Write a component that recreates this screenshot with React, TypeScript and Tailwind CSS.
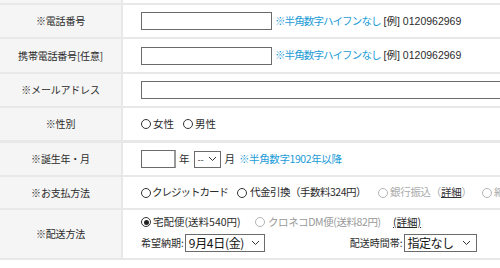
import React from "react";

const Radio = ({ checked = false, disabled = false }: { checked?: boolean; disabled?: boolean }) => (
  <span
    className={`inline-flex items-center justify-center w-[10px] h-[10px] rounded-full border shrink-0 ${
      disabled ? "border-[#b5b5b5]" : "border-[#333]"
    }`}
  >
    {checked && <span className="w-[5px] h-[5px] rounded-full bg-[#222]" />}
  </span>
);

const Chevron = () => (
  <svg width="9" height="6" viewBox="0 0 9 6" className="shrink-0">
    <path d="M1 1 L4.5 4.5 L8 1" fill="none" stroke="#333" strokeWidth="1" />
  </svg>
);

const Row = ({
  label,
  h,
  border = "border-b-2",
  children,
}: {
  label: React.ReactNode;
  h: string;
  border?: string;
  children?: React.ReactNode;
}) => (
  <div className={`flex ${h} ${border} border-[#e8e8e8]`}>
    <div className="w-[121px] shrink-0 bg-[#f5f5f5] flex items-center justify-center text-[10px] tracking-[-0.2px] text-[#2b2b2b]">
      {label}
    </div>
    <div className="w-[2px] shrink-0 bg-[#e8e8e8]" />
    <div className="flex-1 min-w-0 pl-[18px] flex items-center">{children}</div>
  </div>
);

const Blue = ({ children }: { children: React.ReactNode }) => (
  <span className="text-[#1b9bd7]">{children}</span>
);

const Hint = () => (
  <span className="ml-[3px] whitespace-nowrap flex items-center">
    <span className="tracking-[-0.9px]">
      <Blue>※半角数字ハイフンなし</Blue>
    </span>
    <span className="ml-[3px] text-[10.5px]" style={{ fontFamily: "'Liberation Sans', Arial, sans-serif" }}>
      [<span style={{ fontFamily: "'Noto Sans CJK JP', sans-serif" }}>例</span>] 0120962969
    </span>
  </span>
);

export default function App() {
  return (
    <div
      className="w-[500px] h-[268px] overflow-hidden bg-white text-[10.5px] leading-none text-[#2b2b2b]"
      style={{ fontFamily: "'Noto Sans CJK JP', 'Noto Sans', sans-serif" }}
    >
      <Row label="" h="h-[5px]" />
      <Row label="※電話番号" h="h-[34px]">
        <div className="w-[131px] h-[18px] border border-[#6b6b6b] shrink-0" />
        <Hint />
      </Row>
      <Row label="携帯電話番号[任意]" h="h-[35px]">
        <div className="w-[131px] h-[18px] border border-[#6b6b6b] shrink-0" />
        <Hint />
      </Row>
      <Row label="※メールアドレス" h="h-[34px]">
        <div className="w-[400px] h-[18px] border border-[#6b6b6b] shrink-0" />
      </Row>
      <Row label="※性別" h="h-[35px]" border="border-b-[3px]">
        <div className="flex items-center whitespace-nowrap">
          <Radio />
          <span className="ml-[2px] w-[30px]">女性</span>
          <Radio />
          <span className="ml-[2px]">男性</span>
        </div>
      </Row>
      <Row label="※誕生年・月" h="h-[34px]">
        <div className="flex items-center whitespace-nowrap">
          <div className="w-[35px] h-[18px] border border-[#6b6b6b] border-r-2 border-r-[#999]" />
          <span className="ml-[3px]">年</span>
          <div className="ml-[4px] w-[27px] h-[17px] border border-[#6b6b6b] flex items-center justify-between px-[3px]">
            <span className="text-[#333] text-[9px]">--</span>
            <Chevron />
          </div>
          <span className="ml-[4px]">月</span>
          <span className="ml-[4px] tracking-[-0.4px]">
            <Blue>※半角数字1902年以降</Blue>
          </span>
        </div>
      </Row>
      <Row label="※お支払方法" h="h-[33px]">
        <div className="flex items-center whitespace-nowrap">
          <Radio />
          <span className="ml-[1px] w-[85px] tracking-[-1px]">クレジットカード</span>
          <Radio />
          <span className="ml-[3px] w-[128px] tracking-[-0.5px]">代金引換（手数料324円）</span>
          <Radio disabled />
          <span className="ml-[2px] w-[92px] text-[#aaa] tracking-[-0.3px]">
            銀行振込（<span className="underline text-[#333]">詳細</span>）
          </span>
          <Radio disabled />
          <span className="ml-[2px] text-[#aaa]">縮</span>
        </div>
      </Row>
      <Row label="※配送方法" h="h-[50px]">
        <div className="flex flex-col gap-[7px] whitespace-nowrap pt-[1px]">
          <div className="flex items-center">
            <Radio checked />
            <span className="ml-[2px] w-[102px]">宅配便(送料540円)</span>
            <Radio disabled />
            <span className="ml-[3px] text-[#999] w-[125px] tracking-[-0.4px]">クロネコDM便(送料82円)</span>
            <span className="underline">(詳細)</span>
          </div>
          <div className="flex items-center">
            <span className="text-[10px]">希望納期:</span>
            <div className="ml-[1px] w-[80px] h-[18px] border border-[#6b6b6b] flex items-center justify-between pl-[3px] pr-[4px]">
              <span className="text-[12px] text-[#111] tracking-[-0.3px]">9月4日(金)</span>
              <Chevron />
            </div>
            <span className="ml-[85px] text-[10px]">配送時間帯:</span>
            <div className="ml-[1px] w-[73px] h-[18px] border border-[#6b6b6b] flex items-center justify-between pl-[3px] pr-[5px]">
              <span className="text-[12px] text-[#111] tracking-[-0.5px]">指定なし</span>
              <Chevron />
            </div>
          </div>
        </div>
      </Row>
    </div>
  );
}
